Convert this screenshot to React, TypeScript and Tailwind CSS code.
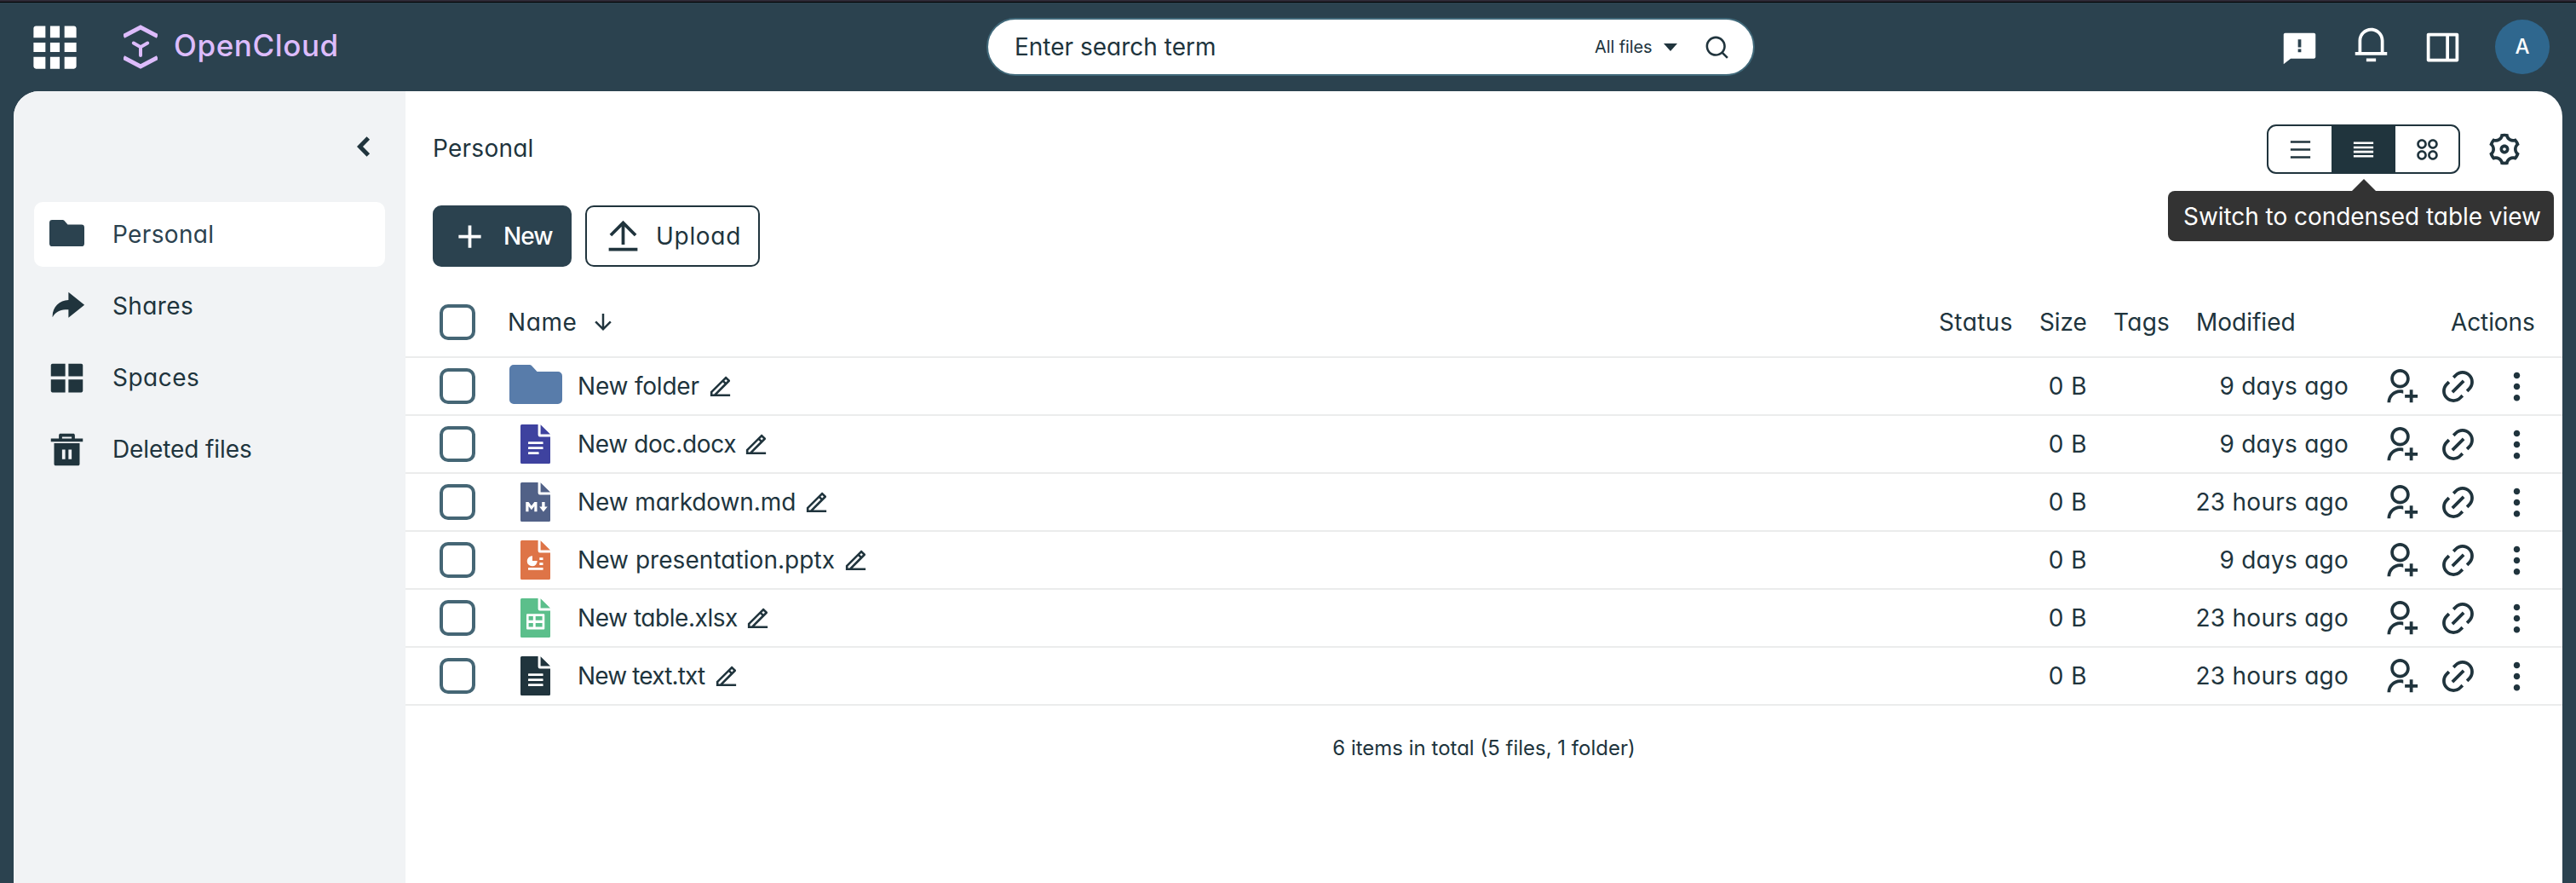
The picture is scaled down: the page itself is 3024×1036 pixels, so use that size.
import type { ReactNode } from "react";
import {
  RiAddFill,
  RiApps2Line,
  RiArrowDownLine,
  RiDeleteBin5Fill,
  RiEdit2Line,
  RiFeedbackFill,
  RiGridFill,
  RiLayoutGridFill,
  RiLink,
  RiMenuLine,
  RiMore2Fill,
  RiNotification3Line,
  RiSearchLine,
  RiSettings3Line,
  RiShareForwardFill,
  RiSideBarLine,
  RiUploadLine,
  RiUserAddLine,
} from "react-icons/ri";

type FileKind = "folder" | "doc" | "md" | "ppt" | "xls" | "txt";

function FolderShape({ className }: { className: string }) {
  return (
    <svg viewBox="0 0 62 46" preserveAspectRatio="none" className={className} fill="currentColor">
      <path d="M5 0H23.5Q25.2 0 26.3 1.2L32.5 8H57a5 5 0 0 1 5 5V41a5 5 0 0 1-5 5H5a5 5 0 0 1-5-5V5a5 5 0 0 1 5-5Z" />
    </svg>
  );
}

function Glyph({ kind }: { kind: FileKind }) {
  if (kind === "doc" || kind === "txt") {
    return (
      <g fill="#fff">
        <rect x="9" y="20.2" width="17.6" height="2.8" rx="0.6" />
        <rect x="9" y="26.2" width="17.6" height="2.8" rx="0.6" />
        <rect x="9" y="32.2" width={kind === "doc" ? 12.6 : 17.6} height="2.8" rx="0.6" />
      </g>
    );
  }
  if (kind === "md") {
    return (
      <g fill="#fff">
        <path d="M6.3 34.3V23h3.2l3.4 4.4L16.3 23h3.2v11.3h-3.2v-6.3l-3.4 4.3-3.4-4.3v6.3Z" />
        <path d="M25.2 23h3.4v5.6h3.1L26.9 34.5 22.2 28.6h3Z" />
      </g>
    );
  }
  if (kind === "ppt") {
    return (
      <g fill="#fff">
        <path d="M14 18.3V24h5.7A6 6 0 1 1 14 18.3Z" />
        <rect x="22.3" y="20.2" width="4.2" height="2.8" />
        <rect x="22.3" y="26.2" width="4.2" height="2.8" />
        <rect x="9" y="32" width="17.6" height="2.8" rx="0.6" />
      </g>
    );
  }
  return (
    <path
      fill="#fff"
      fillRule="evenodd"
      d="M8 18.3H27.3a1 1 0 0 1 1 1V35.5a1 1 0 0 1-1 1H8a1 1 0 0 1-1-1V19.3a1 1 0 0 1 1-1ZM9.6 21V25.7H14.8V21ZM17.7 21V25.7H25.6V21ZM9.6 29V33.4H14.8V29ZM17.7 29V33.4H25.6V29Z"
    />
  );
}

function FileIcon({ kind, color }: { kind: FileKind; color: string }) {
  if (kind === "folder") {
    return <FolderShape className="mb-[5px] h-[46px] w-[62px] text-[#587caa]" />;
  }
  return (
    <svg viewBox="0 0 35 46" className="h-[46px] w-[35px]">
      <path
        className={color}
        d="M1.5 0H20.6V12.3a2.2 2.2 0 0 0 2.2 2.2H35V44.5a1.5 1.5 0 0 1-1.5 1.5H1.5A1.5 1.5 0 0 1 0 44.5V1.5A1.5 1.5 0 0 1 1.5 0ZM23.6 0.3L35 11.5H23.6Z"
      />
      <Glyph kind={kind} />
    </svg>
  );
}

function Checkbox() {
  return <div className="size-[42px] shrink-0 rounded-[10px] border-4 border-[#456675] bg-white" />;
}

function IconCell({ children, width }: { children: ReactNode; width: string }) {
  return <div className={`flex shrink-0 items-center justify-center ${width}`}>{children}</div>;
}

const files: {
  name: string;
  kind: FileKind;
  color: string;
  tracking: string;
  nameWidth: string;
  modified: string;
}[] = [
  { name: "New folder", kind: "folder", color: "", tracking: "tracking-[-0.2px]", nameWidth: "w-[152px]", modified: "9 days ago" },
  { name: "New doc.docx", kind: "doc", color: "fill-[#3e429f]", tracking: "tracking-[-0.35px]", nameWidth: "w-[194px]", modified: "9 days ago" },
  { name: "New markdown.md", kind: "md", color: "fill-[#516187]", tracking: "tracking-[-0.1px]", nameWidth: "w-[265px]", modified: "23 hours ago" },
  { name: "New presentation.pptx", kind: "ppt", color: "fill-[#de7447]", tracking: "tracking-[0.05px]", nameWidth: "w-[311px]", modified: "9 days ago" },
  { name: "New table.xlsx", kind: "xls", color: "fill-[#5bbf8b]", tracking: "tracking-[-0.45px]", nameWidth: "w-[196px]", modified: "23 hours ago" },
  { name: "New text.txt", kind: "txt", color: "fill-[#20343d]", tracking: "tracking-[-0.85px]", nameWidth: "w-[159px]", modified: "23 hours ago" },
];

function Header() {
  return (
    <header className="flex h-[107px] shrink-0 flex-col bg-[#2b424f]">
      <div className="h-0.5 bg-[#2d2936]" />
      <div className="h-px bg-black" />
      <div className="flex h-[104px] items-center text-white">
        <RiGridFill size={67} className="ml-[30.5px] shrink-0" />
        <svg viewBox="0 0 40 52" className="ml-[47.5px] h-[52px] w-10 shrink-0" fill="none" stroke="#ddbcfc">
          <path d="M0 13.6L20 3L40 13.6" strokeWidth="5" />
          <path d="M0 38.4L20 49L40 38.4" strokeWidth="5" />
          <path d="M11.8 21.5L20 26.2L28.2 21.5M20 26.2V36" strokeWidth="4" strokeLinecap="round" />
        </svg>
        <div className="ml-[19px] w-[220px] pb-1 text-[35px] leading-10 font-medium tracking-[0.6px] text-[#ddbcfc]">
          OpenCloud
        </div>
        <div className="ml-[734px] flex h-[68px] w-[902px] items-center rounded-full border-2 border-[#41697a] bg-white pl-[31px] text-[#20343d]">
          <span className="w-[681px]">Enter search term</span>
          <span className="w-[81px] text-xl tracking-[-0.1px]">All files</span>
          <svg viewBox="0 0 16 9" className="h-[9px] w-4">
            <path d="M0 0H16L8 9Z" fill="currentColor" />
          </svg>
          <RiSearchLine size={31} className="ml-[31px]" />
        </div>
        <div className="ml-[617px] flex h-full items-center gap-[39px]">
          <RiFeedbackFill size={45} />
          <RiNotification3Line size={45} className="mb-2" />
          <RiSideBarLine size={45} className="-scale-x-100" />
          <div className="flex size-16 items-center justify-center rounded-full bg-[#2f678e] text-2xl font-medium">
            A
          </div>
        </div>
      </div>
    </header>
  );
}

function NavItem({ icon, label, tracking, active }: { icon: ReactNode; label: string; tracking: string; active?: boolean }) {
  return (
    <div
      className={
        active
          ? "flex h-[76px] items-center rounded-[10px] bg-white text-[#2b424f]"
          : "flex h-[76px] items-center"
      }
    >
      <IconCell width="w-[76px]">{icon}</IconCell>
      <span className={`ml-4 ${tracking}`}>{label}</span>
    </div>
  );
}

function Sidebar() {
  return (
    <aside className="flex w-[460px] shrink-0 flex-col bg-[#f1f3f5] px-6">
      <div className="flex h-[130px] items-start justify-end pt-[53px] pr-[17px]">
        <svg viewBox="0 0 16 24" className="h-6 w-4" fill="none" stroke="#20343d" strokeWidth="5">
          <path d="M13.3 2L3.5 12L13.3 22" />
        </svg>
      </div>
      <nav className="flex flex-col gap-2">
        <NavItem active icon={<FolderShape className="mb-1 h-[31px] w-[41px]" />} label="Personal" tracking="tracking-[0.35px]" />
        <NavItem icon={<RiShareForwardFill size={45} />} label="Shares" tracking="tracking-[0.4px]" />
        <NavItem icon={<RiLayoutGridFill size={45} />} label="Spaces" tracking="tracking-[0.5px]" />
        <NavItem icon={<RiDeleteBin5Fill size={45} />} label="Deleted files" tracking="tracking-[-0.1px]" />
      </nav>
    </aside>
  );
}

function ViewSwitch() {
  return (
    <div className="relative flex h-[58px] w-[227px] rounded-[11px] border-2 border-[#20343d]">
      <IconCell width="w-[74px]">
        <RiMenuLine size={31} />
      </IconCell>
      <div className="flex w-[75px] items-center justify-center bg-[#20343d] text-white">
        <svg viewBox="0 0 24 24" className="size-[31px]" fill="currentColor">
          <path d="M3 5H21V7H3ZM3 9H21V11H3ZM3 13H21V15H3ZM3 17H21V19H3Z" />
        </svg>
      </div>
      <IconCell width="w-[74px]">
        <RiApps2Line size={31} />
      </IconCell>
      <div className="absolute top-[62px] left-[98px]">
        <svg viewBox="0 0 28 14" className="h-[14px] w-7">
          <path d="M14 0L28 14H0Z" fill="#333" />
        </svg>
      </div>
      <div className="absolute top-[76px] -right-[112px] flex h-[59px] w-[453px] items-center rounded-lg bg-[#333] pl-[18px] tracking-[-0.05px] whitespace-nowrap text-white">
        Switch to condensed table view
      </div>
    </div>
  );
}

function TableHead() {
  return (
    <div className="flex h-[83px] items-center border-b-2 border-[#ebecec] pl-10">
      <Checkbox />
      <div className="ml-[38px] flex items-center">
        <span className="w-[97px] tracking-[0.6px]">Name</span>
        <RiArrowDownLine size={30} />
      </div>
      <div className="ml-auto flex items-center">
        <span className="w-[118px] tracking-[0.4px]">Status</span>
        <span className="w-[87px] tracking-[-0.1px]">Size</span>
        <span className="w-[97px] tracking-[0.3px]">Tags</span>
        <span className="w-[299px]">Modified</span>
        <span className="w-[131px] tracking-[-0.1px]">Actions</span>
      </div>
    </div>
  );
}

function FileRow({ file }: { file: (typeof files)[number] }) {
  return (
    <div className="flex h-[68px] items-center border-b-2 border-[#ebecec] pl-10">
      <Checkbox />
      <IconCell width="ml-[38px] w-[65px]">
        <FileIcon kind={file.kind} color={file.color} />
      </IconCell>
      <span className={`ml-[17px] whitespace-nowrap ${file.tracking} ${file.nameWidth}`}>{file.name}</span>
      <RiEdit2Line size={31} />
      <div className="ml-auto flex items-center">
        <span className="tracking-[0.5px]">0 B</span>
        <span className="w-[307px] text-right tracking-[0.25px]">{file.modified}</span>
        <RiUserAddLine size={45} className="ml-[38px]" />
        <RiLink size={45} className="ml-[23px]" />
        <RiMore2Fill size={45} className="mr-[31px] ml-[24px]" />
      </div>
    </div>
  );
}

export default function App() {
  return (
    <div className="flex h-[1036px] w-[3024px] flex-col overflow-hidden bg-[#2b424f] font-[Inter,sans-serif] text-[28px] leading-9 text-[#20343d] [font-feature-settings:'cv11']">
      <Header />
      <div className="mx-4 flex min-h-0 flex-1 overflow-hidden rounded-t-[30px] bg-white">
        <Sidebar />
        <main className="flex flex-1 flex-col">
          <div className="flex items-center pt-[39px] pr-[46px] pl-8">
            <span className="pb-0.5 tracking-[0.25px]">Personal</span>
            <div className="ml-auto flex items-center gap-[30px]">
              <ViewSwitch />
              <RiSettings3Line size={44} />
            </div>
          </div>
          <div className="mt-[37px] flex gap-4 pl-8">
            <button className="flex h-[72px] w-[163px] items-center rounded-[10px] bg-[#2b424f] pl-[21px] text-white">
              <RiAddFill size={45} />
              <span className="ml-[17px] font-medium tracking-[-0.9px]">New</span>
            </button>
            <button className="flex h-[72px] w-[205px] items-center rounded-[10px] border-2 border-[#20343d] pl-[20px]">
              <RiUploadLine size={45} />
              <span className="ml-[16px] tracking-[0.7px]">Upload</span>
            </button>
          </div>
          <div className="mt-6 flex flex-col">
            <TableHead />
            {files.map((file) => (
              <FileRow key={file.name} file={file} />
            ))}
          </div>
          <div className="mt-8 text-center text-2xl leading-9">
            6 items in total (5 files, 1 folder)
          </div>
        </main>
      </div>
    </div>
  );
}
